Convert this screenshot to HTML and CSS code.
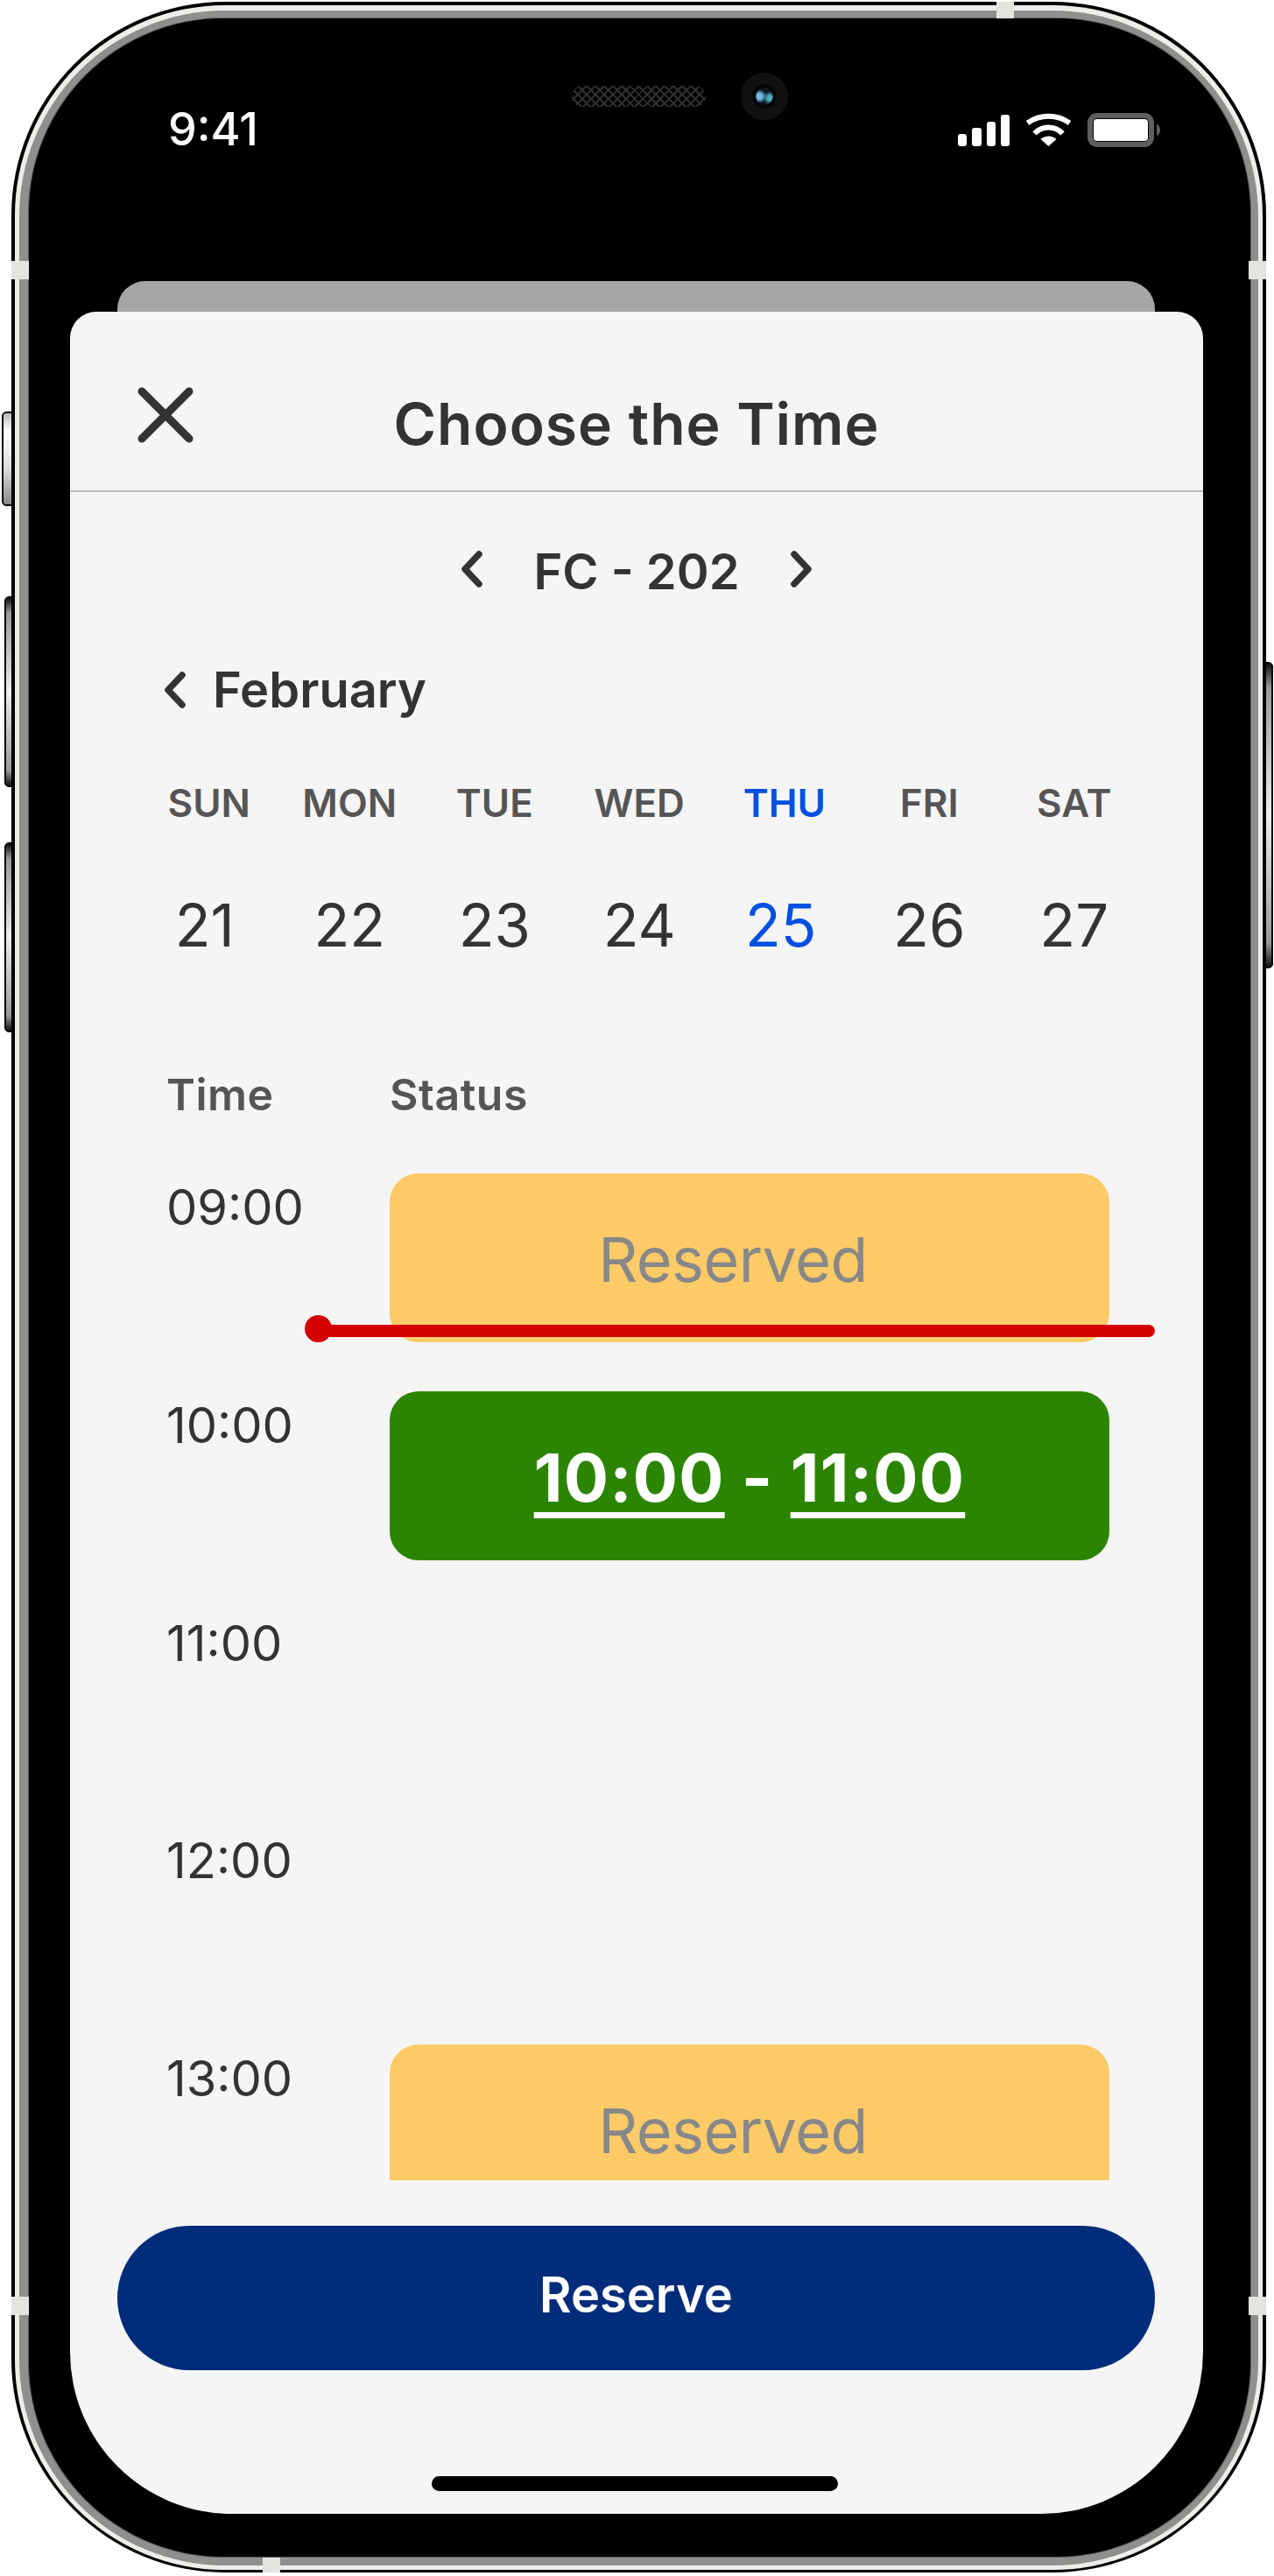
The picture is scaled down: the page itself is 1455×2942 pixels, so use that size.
FILE: index.html
```html
<!DOCTYPE html>
<html lang="en">
<head>
    <meta charset="UTF-8">
    <title>Choose the Time</title>
    <link rel="stylesheet" href="styles.css">
</head>
<body>
<div class="phone">
    <span class="side-btn mute"></span>
    <span class="side-btn vol-up"></span>
    <span class="side-btn vol-down"></span>
    <span class="side-btn power"></span>

    <div class="rim">
        <div class="band">
            <div class="screen">
                <div class="status">
                    <span class="clock">9:41</span>
                    <div class="notch">
                        <span class="speaker"></span>
                        <span class="camera"><span class="lens"></span></span>
                    </div>
                    <div class="status-icons">
                        <svg class="signal" width="59" height="36" viewBox="0 0 59 36" fill="#fff">
                            <rect x="0" y="22" width="10" height="14" rx="3"/>
                            <rect x="16" y="15" width="11" height="21" rx="3"/>
                            <rect x="33" y="8" width="10" height="28" rx="3"/>
                            <rect x="49" y="0" width="10" height="36" rx="3"/>
                        </svg>
                        <svg width="53" height="38" viewBox="0 0 53 38" fill="none" stroke="#fff" stroke-width="6">
                            <path d="M2.5 11.5A41.5 41.5 0 0 1 50.5 11.5"/>
                            <path d="M10.5 23.5A21.8 21.8 0 0 1 42.5 23.5"/>
                            <path d="M26.5 38L17.5 30A13 13 0 0 1 35.5 30Z" fill="#fff" stroke="none"/>
                        </svg>
                        <svg width="83" height="39" viewBox="0 0 83 39">
                            <rect x="3" y="3" width="70" height="33" rx="8" fill="none" stroke="#5e5e5e" stroke-width="6"/>
                            <rect x="7" y="7" width="62" height="25" rx="4" fill="#fff"/>
                            <path d="M79 13C82 14 83 17 83 19.500C83 22 82 25 79 26Z" fill="#5e5e5e"/>
                        </svg>
                    </div>
                </div>

                <div class="sheet-back"></div>

                <div class="sheet">
                    <div class="sheet-head">
                        <svg class="close" width="64" height="64" viewBox="0 0 64 64" fill="none" stroke="#333" stroke-width="9" stroke-linecap="round">
                            <path d="M5 5L59 59M59 5L5 59"/>
                        </svg>
                        <h1>Choose the Time</h1>
                    </div>

                    <div class="room">
                        <svg class="chev" width="24" height="42" viewBox="0 0 24 42"><path d="M20 4L4 21L20 38"/></svg>
                        <span>FC - 202</span>
                        <svg class="chev" width="24" height="42" viewBox="0 0 24 42"><path d="M4 4L20 21L4 38"/></svg>
                    </div>

                    <div class="month">
                        <svg class="chev" width="24" height="42" viewBox="0 0 24 42"><path d="M20 4L4 21L20 38"/></svg>
                        <span>February</span>
                    </div>

                    <div class="week">
                        <span class="wd first">SUN</span>
                        <span class="wd">MON</span>
                        <span class="wd">TUE</span>
                        <span class="wd">WED</span>
                        <span class="wd today">THU</span>
                        <span class="wd">FRI</span>
                        <span class="wd">SAT</span>
                        <span class="day">21</span>
                        <span class="day">22</span>
                        <span class="day">23</span>
                        <span class="day">24</span>
                        <span class="day today">25</span>
                        <span class="day">26</span>
                        <span class="day">27</span>
                    </div>

                    <div class="cols">
                        <span>Time</span>
                        <span>Status</span>
                    </div>

                    <div class="schedule">
                        <div class="row">
                            <span class="hour">09:00</span>
                            <div class="slot reserved">Reserved</div>
                        </div>
                        <div class="row">
                            <span class="hour">10:00</span>
                            <div class="slot picked"><u>10:00</u>&nbsp;-&nbsp;<u>11:00</u></div>
                        </div>
                        <div class="row">
                            <span class="hour">11:00</span>
                        </div>
                        <div class="row">
                            <span class="hour">12:00</span>
                        </div>
                        <div class="row">
                            <span class="hour">13:00</span>
                            <div class="slot reserved">Reserved</div>
                        </div>
                        <div class="now"></div>
                    </div>

                    <button class="reserve">Reserve</button>
                    <div class="home-bar"></div>
                </div>
            </div>
        </div>
    </div>

    <span class="antenna ant-lt"></span>
    <span class="antenna ant-lb"></span>
    <span class="antenna ant-rt"></span>
    <span class="antenna ant-rb"></span>
    <span class="antenna ant-top"></span>
    <span class="antenna ant-bottom"></span>
</div>
</body>
</html>
```

FILE: styles.css
```css
* {
    margin: 0;
    padding: 0;
    box-sizing: border-box;
}

body {
    background: #fff;
    font-family: Inter, "Liberation Sans", sans-serif;
    color: #333;
}

/* phone frame */
.phone {
    position: relative;
    width: 1433px;
    height: 2936px;
    margin: 2px 0 0 13px;
    padding: 4px 4px 3px 4px;
    background: #000;
    border-radius: 244px;
}

.rim {
    height: 100%;
    padding: 6px 5px 5px 5px;
    background: #eceeea;
    border-radius: 240px;
}

.band {
    height: 100%;
    padding: 9px 9px 10px 11px;
    background: #8e908e;
    border-radius: 235px;
}

.screen {
    height: 100%;
    background: #000;
    border-radius: 222px;
    box-shadow: 0 0 0 1px #5f5f5f;
    overflow: hidden;
}

.antenna {
    position: absolute;
    background: #e3e4df;
}

.ant-lt, .ant-lb, .ant-rt, .ant-rb {
    width: 20px;
    height: 21px;
}

.ant-lt { left: 0; top: 296px; }
.ant-lb { left: 0; top: 2621px; }
.ant-rt { right: 0; top: 296px; }
.ant-rb { right: 0; top: 2621px; }

.ant-top, .ant-bottom {
    width: 20px;
    height: 19px;
}

.ant-top { left: 1125px; top: 0; }
.ant-bottom { left: 287px; bottom: -2px; }

.side-btn {
    position: absolute;
    border: 1px solid #000;
    border-right: 0;
    outline: 1px solid #000;
    background: linear-gradient(#111, #999 8%, #eee 50%, #999 92%, #111);
    border-radius: 4px 0 0 4px;
}

.mute {
    left: -10px;
    top: 469px;
    width: 10px;
    height: 106px;
    background: linear-gradient(#bbb, #fff 20%, #ddd 60%, #888);
}

.vol-up, .vol-down {
    left: -7px;
    width: 7px;
}

.vol-up { top: 680px; height: 216px; }
.vol-down { top: 961px; height: 215px; }

.power {
    right: -7px;
    top: 755px;
    width: 7px;
    height: 348px;
    border: 1px solid #000;
    border-left: 0;
    border-radius: 0 4px 4px 0;
}

/* status bar */
.status {
    display: grid;
    grid-template-columns: 460px 441px auto;
    align-items: start;
    height: 300px;
    padding-left: 159px;
    color: #fff;
}

.clock {
    margin-top: 95px;
    font-size: 52px;
    line-height: 64px;
    font-weight: 500;
}

.notch {
    display: flex;
    align-items: center;
    gap: 40px;
    margin-top: 62px;
    margin-left: 1px;
}

.speaker {
    width: 153px;
    height: 24px;
    border-radius: 12px;
    background:
        repeating-linear-gradient(45deg, #2e2e2e 0 2px, transparent 2px 7px),
        repeating-linear-gradient(-45deg, #2e2e2e 0 2px, transparent 2px 7px),
        #000;
}

.camera {
    display: flex;
    align-items: center;
    justify-content: center;
    width: 54px;
    height: 54px;
    border-radius: 50%;
    background: #111;
}

.lens {
    width: 20px;
    height: 20px;
    border-radius: 50%;
    outline: 4px solid #040404;
    background:
        radial-gradient(circle at 22% 50%, #6db6e0 0 18%, transparent 42%),
        radial-gradient(circle at 80% 60%, #4fa8b8 0 14%, transparent 38%),
        #0a1620;
}

.status-icons {
    display: flex;
    align-items: flex-start;
    gap: 18px;
    margin-top: 108px;
    margin-left: 1px;
}

.signal {
    margin-top: 2px;
}

/* sheet */
.sheet-back {
    height: 35px;
    margin: 0 109px 0 101px;
    background: #a6a6a6;
    border-radius: 32px 32px 0 0;
}

.sheet {
    height: 2515px;
    margin: 0 54px 0 47px;
    background: #f5f5f5;
    border-radius: 30px 30px 185px 185px;
    overflow: hidden;
}

.sheet-head {
    display: grid;
    grid-template-columns: 1fr auto 1fr;
    height: 206px;
    padding-top: 88px;
    border-bottom: 2px solid #bbb;
}

.close {
    margin: -2px 0 0 77px;
}

.sheet-head h1 {
    font-size: 66px;
    line-height: 80px;
    font-weight: 600;
    letter-spacing: 1px;
}

.chev {
    fill: none;
    stroke: #333;
    stroke-width: 7.5;
    stroke-linecap: round;
    stroke-linejoin: round;
}

.room {
    display: flex;
    align-items: center;
    justify-content: center;
    gap: 58px;
    margin-top: 56px;
    font-size: 56px;
    line-height: 70px;
    font-weight: 600;
}

.room .chev {
    margin-bottom: 6px;
}

.month {
    display: flex;
    align-items: center;
    gap: 31px;
    margin-top: 65px;
    padding-left: 108px;
    font-size: 56px;
    line-height: 70px;
    font-weight: 600;
}

.week {
    display: grid;
    grid-template-columns: repeat(7, 165.5px);
    row-gap: 72px;
    margin-top: 66px;
    padding-left: 71px;
    text-align: center;
}

.wd {
    font-size: 44px;
    line-height: 56px;
    font-weight: 600;
    color: #555;
}

.wd.first {
    padding-left: 10px;
}

.day {
    font-size: 67px;
    line-height: 80px;
}

.week .today {
    color: #0050e0;
}

.day.today {
    padding-right: 8px;
}

.cols {
    display: grid;
    grid-template-columns: 255px auto;
    margin-top: 123px;
    padding-left: 110px;
    font-size: 50px;
    line-height: 60px;
    font-weight: 600;
    letter-spacing: 0.5px;
    color: #555;
}

.schedule {
    position: relative;
    height: 1210px;
    padding: 60px 0 0 110px;
    overflow: hidden;
}

.row {
    display: grid;
    grid-template-columns: 255px 822px;
    height: 193px;
    margin-bottom: 55.75px;
}

.hour {
    padding-top: 4px;
    font-size: 56px;
    line-height: 70px;
}

.slot {
    display: flex;
    align-items: center;
    justify-content: center;
    height: 193px;
    border-radius: 33px;
    line-height: 90px;
}

.reserved {
    padding: 4px 38px 0 0;
    background: #fccb68;
    color: #888;
    font-size: 70px;
    letter-spacing: -0.5px;
}

.picked {
    padding-top: 4px;
    background: #2c8500;
    color: #fff;
    font-size: 76px;
    font-weight: 700;
    letter-spacing: 1.2px;
}

.picked u {
    text-decoration-thickness: 7px;
    text-underline-offset: 12px;
}

/* current time marker */
.now {
    position: absolute;
    left: 268px;
    top: 222px;
    width: 971px;
    height: 31px;
}

.now::before {
    content: "";
    position: absolute;
    left: 0;
    top: 0;
    width: 31px;
    height: 31px;
    border-radius: 50%;
    background: #d40000;
}

.now::after {
    content: "";
    position: absolute;
    left: 20px;
    right: 0;
    top: 11px;
    height: 14px;
    border-radius: 0 7px 7px 0;
    background: #d40000;
}

.reserve {
    display: flex;
    align-items: center;
    justify-content: center;
    width: 1185px;
    height: 165px;
    margin: 52px 0 0 54px;
    padding-bottom: 8px;
    border: 0;
    border-radius: 83px;
    background: #012c7a;
    color: #fff;
    font-family: inherit;
    font-size: 56px;
    font-weight: 600;
}

.home-bar {
    width: 464px;
    height: 17px;
    margin: 121px 0 0 413px;
    border-radius: 9px;
    background: #000;
}
```
